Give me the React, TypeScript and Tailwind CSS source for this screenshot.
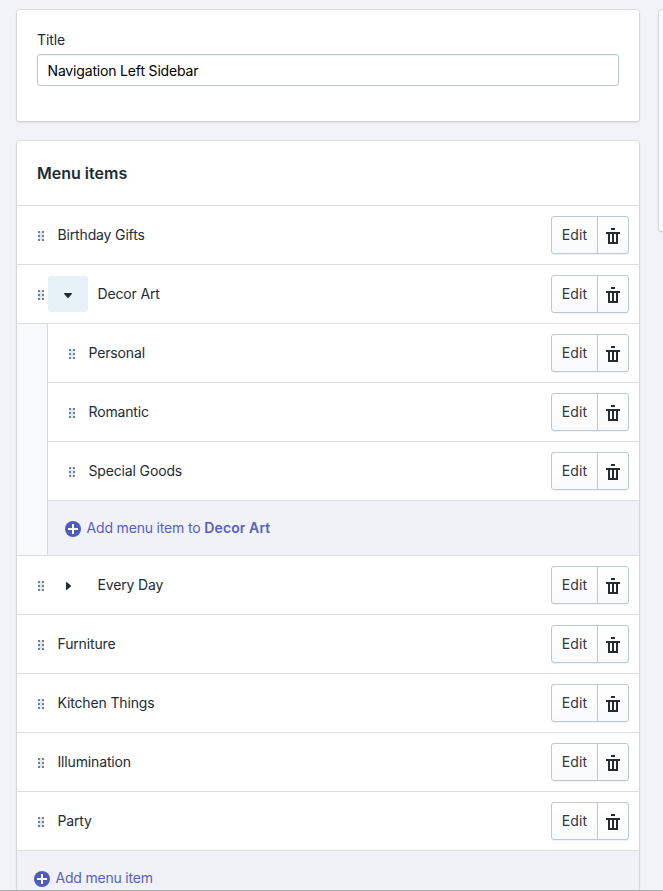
import React from 'react';

const card = 'bg-white rounded-[3px] shadow-[0_0_0_1px_rgba(63,63,68,0.09),0_1px_3px_0_rgba(63,63,68,0.18)]';

function Handle() {
  return (
    <svg className="shrink-0" width="6" height="10" viewBox="0 0 6 10" fill="#6f7f8e">
      <rect width="6" height="10" fill="#e3e8ed" />
      {[0, 4, 8].map((y) => (
        <React.Fragment key={y}>
          <rect x="0" y={y} width="2" height="2" rx="0.3" />
          <rect x="4" y={y} width="2" height="2" rx="0.3" />
        </React.Fragment>
      ))}
    </svg>
  );
}

function Actions() {
  return (
    <div className="ml-auto mr-[10px] flex h-[38px] w-[78px] shrink-0 rounded-[3px] border border-[#bdc8d1] bg-linear-to-b from-white to-[#f9fafb] shadow-[0_1px_0_rgba(22,29,37,0.05)]">
      <button className="w-[46px] border-r border-[#bdc8d1] pb-px text-[14px] tracking-[0.1px] text-[#31373d]">Edit</button>
      <button className="flex flex-1 items-start justify-center pt-[11px]" aria-label="Delete">
        <svg width="14" height="16" viewBox="0 0 14 16" fill="#262b30">
          <path d="M5 0h4v2H5zM0 4h14v2h-2v10H2V6H0zM4 6v8h2V6zM8 6v8h2V6z" fillRule="evenodd" />
        </svg>
      </button>
    </div>
  );
}

function Row({ label, nested, toggle }: { label: string; nested?: boolean; toggle?: 'open' | 'closed' }) {
  return (
    <li className={`flex h-[59px] items-center border-t border-[#dadfe4] ${nested ? 'first:border-t-0 first:h-[58px]' : ''}`}>
      <span className="ml-[21px] flex items-center pt-[2px]">
        <Handle />
      </span>
      {toggle && (
        <button
          aria-label="Toggle"
          className={`ml-1 flex h-9 w-10 items-center justify-center rounded-[3px] ${toggle === 'open' ? 'bg-[#e6f1f8]' : ''}`}
        >
          {toggle === 'open' ? (
            <svg className="mt-[3px]" width="8" height="5" viewBox="0 0 8 5" fill="#212b36">
              <path d="M.5 0h7q.8.3.3 1L4.5 4.8q-.5.4-1 0L.2 1Q-.3.3.5 0z" />
            </svg>
          ) : (
            <svg className="mt-[2px] ml-[1px]" width="5" height="8" viewBox="0 0 5 8" fill="#212b36">
              <path d="M0 .5Q.3-.3 1 .2l3.8 3.3q.4.5 0 1L1 7.8q-.7.5-1-.3z" />
            </svg>
          )}
        </button>
      )}
      <span className={`pb-px text-[14px] tracking-[-0.15px] text-[#212b36] ${toggle ? 'ml-[9.5px]' : 'ml-[13.5px]'}`}>{label}</span>
      <Actions />
    </li>
  );
}

function Plus() {
  return (
    <svg className="mt-px shrink-0" width="16" height="16" viewBox="0 0 16 16">
      <circle cx="8" cy="8" r="8" fill="#4f5bbd" />
      <path d="M8 3v10M3 8h10" stroke="#fff" strokeWidth="2" />
    </svg>
  );
}

export default function App() {
  return (
    <div className="relative flex h-[891px] w-[663px] gap-5 overflow-hidden bg-[#f2f3f8] pl-[17px] pt-[10px] font-['Inter','Liberation_Sans',sans-serif] text-[14px] leading-5">
      <main className="w-[622px] shrink-0">
        <section className={`${card} h-[111px] px-5 pt-5`}>
          <label className="block tracking-[-0.1px] text-[#212b36]" htmlFor="title">Title</label>
          <input
            id="title"
            readOnly
            value="Navigation Left Sidebar"
            className="mt-1 block h-8 w-full rounded-[3px] border border-[#b9c5d0] bg-white px-[9.5px] pt-px text-[14px] tracking-[-0.17px] text-black shadow-[inset_0_1px_0_rgba(99,115,129,0.08)] outline-none"
          />
        </section>
        <section className={`${card} mt-5`}>
          <h2 className="flex h-16 items-center text-[16px] font-semibold text-[#212b36] pl-5">Menu items</h2>
          <ul>
            <Row label="Birthday Gifts" />
            <Row label="Decor Art" toggle="open" />
            <li className="border-t border-[#dadfe4] bg-[#f8f9fb] pl-[30px]">
              <div className="border-l border-[#d5dae0] bg-white">
                <ul>
                  <Row label="Personal" nested />
                  <Row label="Romantic" nested />
                  <Row label="Special Goods" nested />
                </ul>
                <button className="flex h-[55px] w-full items-center border-t border-[#dadfe4] bg-[#f1f2f8] pl-[17px] text-[#5661bf]">
                  <Plus />
                  <span className="ml-[5.5px] tracking-[-0.17px]">Add menu item to <b className="font-semibold tracking-[0.12px]">Decor Art</b></span>
                </button>
              </div>
            </li>
            <Row label="Every Day" toggle="closed" />
            <Row label="Furniture" />
            <Row label="Kitchen Things" />
            <Row label="Illumination" />
            <Row label="Party" />
          </ul>
          <button className="flex h-[55px] w-full items-center border-t border-[#dadfe4] bg-[#f1f2f8] pl-[17px] text-[#5661bf]">
            <Plus />
            <span className="ml-[5.5px] tracking-[-0.2px]">Add menu item</span>
          </button>
        </section>
      </main>
      <aside className="h-[221px] w-[200px] shrink-0 rounded-[3px] bg-[#fafbfc] shadow-[0_0_0_1px_rgba(63,63,68,0.09),0_1px_3px_0_rgba(63,63,68,0.18)]" />
      <div className="absolute inset-x-0 bottom-0 h-px bg-[#a9abaf]" />
    </div>
  );
}
